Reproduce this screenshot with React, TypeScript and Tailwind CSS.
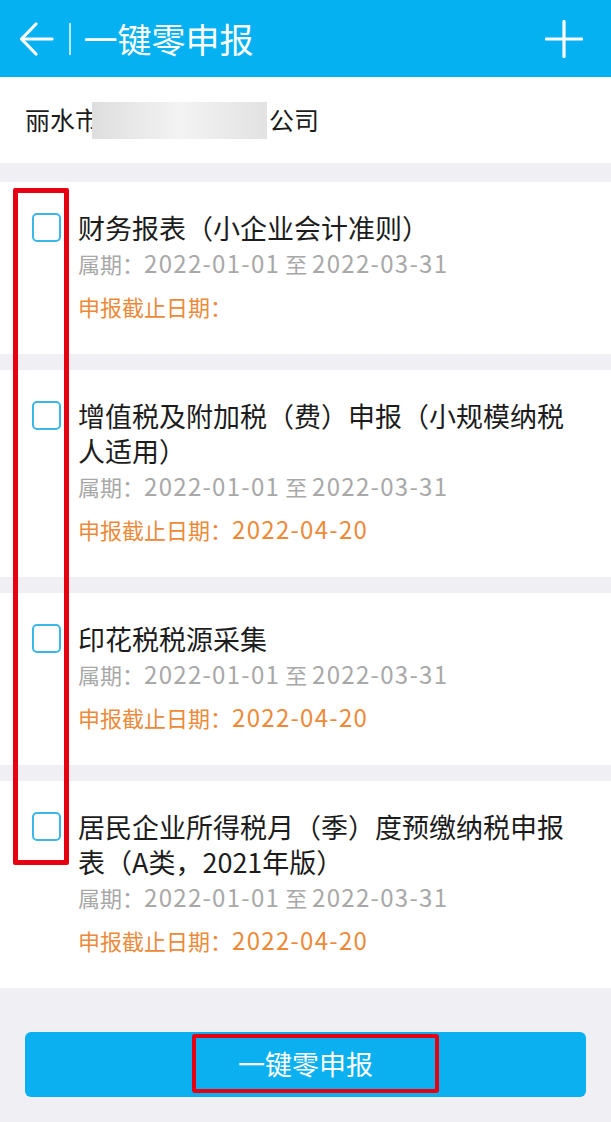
import React from "react";

interface TaxItem {
  title: string;
  deadline: string;
}

const items: TaxItem[] = [
  { title: "财务报表（小企业会计准则）", deadline: "" },
  { title: "增值税及附加税（费）申报（小规模纳税人适用）", deadline: "2022-04-20" },
  { title: "印花税税源采集", deadline: "2022-04-20" },
  { title: "居民企业所得税月（季）度预缴纳税申报表（A类，2021年版）", deadline: "2022-04-20" },
];

const BackArrow = () => (
  <svg width="36" height="36" viewBox="0 0 36 36" fill="none" stroke="white" strokeWidth="3.2" strokeLinecap="round" strokeLinejoin="round">
    <path d="M3 18 H33" />
    <path d="M17 3 L2.5 18 L17 33" />
  </svg>
);

const PlusIcon = () => (
  <svg width="38" height="38" viewBox="0 0 38 38" fill="none" stroke="white" strokeWidth="3.2" strokeLinecap="round">
    <path d="M19 1.5 V36.5" />
    <path d="M1.5 19 H36.5" />
  </svg>
);

// dates in the app use a wider numeral face than the CJK text
const Num = ({ children }: { children: React.ReactNode }) => (
  <span className="text-[24px] leading-[20px] tracking-[1.3px]">{children}</span>
);

const ItemCard = ({ item }: { item: TaxItem }) => (
  <div className="bg-white flex pl-[32px] pr-[26px] pt-[28px] pb-[30px]">
    <div className="w-[29px] h-[29px] mt-[3px] shrink-0 rounded-[5px] border-[2.5px] border-[#3bb6e6]" />
    <div className="ml-[17px] flex-1">
      <div className="text-[27px] leading-[35px] text-[#1c1c1c]">{item.title}</div>
      <div className="mt-[1px] h-[35px] text-[22px] leading-[35px] text-[#a8a8a8]">
        属期：<Num>2022-01-01</Num> 至 <Num>2022-03-31</Num>
      </div>
      <div className="mt-[8px] h-[35px] text-[22px] leading-[35px] text-[#ec8a3a]">
        申报截止日期：<Num>{item.deadline}</Num>
      </div>
    </div>
  </div>
);

export default function App() {
  return (
    <div
      className="relative w-[611px] min-h-[1122px] bg-[#efeff4] overflow-hidden"
      style={{ fontFamily: '"Noto Sans CJK SC", "Noto Sans", sans-serif' }}
    >
      {/* header */}
      <header className="h-[77px] bg-[#05b1f1] flex items-center pl-[19px] pr-[28px]">
        <BackArrow />
        <div className="ml-[14px] w-[1.5px] h-[32px] bg-white/70" />
        <h1 className="ml-[13px] text-[34px] text-white leading-none">一键零申报</h1>
        <div className="ml-auto">
          <PlusIcon />
        </div>
      </header>

      {/* company */}
      <div className="h-[86px] bg-white flex items-center px-[25px] text-[25px] text-[#1c1c1c]">
        <span>丽水市</span>
        <span className="-ml-[8px] w-[175px] h-[37px] bg-gradient-to-r from-[#dedede] via-[#f3f3f3] to-[#e2e2e2]" />
        <span className="ml-[2px]">公司</span>
      </div>

      {/* list */}
      <div className="flex flex-col gap-[16px] pt-[19px]">
        {items.map((item) => (
          <ItemCard key={item.title} item={item} />
        ))}
      </div>

      {/* submit */}
      <div className="px-[25px] pt-[44px] pb-[25px]">
        <button className="w-full h-[65px] rounded-[6px] bg-[#0bb0f0] text-white text-[27px]">
          一键零申报
        </button>
      </div>

      {/* red annotation boxes */}
      <div className="absolute left-[13px] top-[188px] w-[56px] h-[677px] border-[5px] border-[#e60012] rounded-[2px]" />
      <div className="absolute left-[192px] top-[1034px] w-[247px] h-[59px] border-[4px] border-[#e60012] rounded-[3px]" />
    </div>
  );
}
